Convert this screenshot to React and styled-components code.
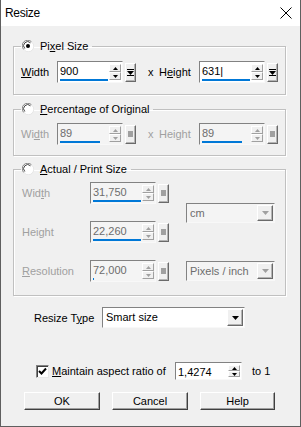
import React from 'react'
import styled, { createGlobalStyle } from 'styled-components'

const Global = createGlobalStyle`
  html, body { margin: 0; padding: 0; background: #f0f0f0; }
  body { font-family: "Liberation Sans", Arial, sans-serif; font-size: 11px; color: #000; }
  * { box-sizing: border-box; }
`

const Window = styled.div`
  width: 301px;
  height: 427px;
  display: flex;
  flex-direction: column;
  background: #f0f0f0;
  border: 1px solid #5f5f5f;
  border-top: none;
  overflow: hidden;
`

const TitleBar = styled.div`
  height: 26px;
  flex: none;
  background: #fff;
  display: flex;
  align-items: center;
  justify-content: space-between;
  padding: 0 8px 0 4px;
  font-size: 12px;
  letter-spacing: -0.3px;
`

const Body = styled.div`
  flex: 1;
  display: flex;
  flex-direction: column;
  padding: 13px 14px 0 12px;
`

// etched group box, legend sits on the top line
const Group = styled.fieldset`
  margin: ${p => p.$mt}px 0 0;
  padding: ${p => p.$pt}px 0 ${p => p.$pb}px ${p => p.$pl}px;
  border: 1px solid #c0c0c0;
  box-shadow: inset 1px 1px 0 #fff, 1px 1px 0 #fff;
  min-width: 0;
`

const Legend = styled.legend`
  height: 14px;
  padding: 0 4px 0 1px;
  margin-left: ${p => p.$ml || 0}px;
  display: flex;
  align-items: center;
  gap: 6px;
  line-height: 14px;
`

const Key = styled.span`
  text-decoration: underline;
  text-underline-offset: 1px;
`

const Row = styled.div`
  display: flex;
  align-items: center;
  height: 22px;
`

const Label = styled.span`
  flex: none;
  width: ${p => p.$w}px;
  margin-left: ${p => p.$ml || 0}px;
  color: ${p => (p.$off ? '#a0a0a0' : '#000')};
  white-space: nowrap;
`

const Field = styled.div`
  flex: none;
  display: flex;
  width: ${p => p.$w}px;
  height: ${p => p.$h || 22}px;
  border: 1px solid;
  border-color: #828282 #f8f8f8 #f8f8f8 #828282;
  background: ${p => (p.$off ? '#f4f4f4' : '#fff')};
  padding: 1px;
`

const TextArea = styled.div`
  flex: 1;
  display: flex;
  flex-direction: column;
  justify-content: space-between;
  padding-left: 1px;
  line-height: 16px;
  color: ${p => (p.$off ? '#6d6d6d' : '#000')};
`

const Bar = styled.div`
  height: 2px;
  background: #0078d7;
`

const Spinner = styled.div`
  flex: none;
  width: 12px;
  display: flex;
  flex-direction: column;
  margin: 1px 0 1px 1px;
`

const SpinBtn = styled.div`
  flex: 1;
  display: flex;
  align-items: center;
  justify-content: center;
  background: #f0f0f0;
  border: 1px solid;
  border-color: #fff #a0a0a0 #a0a0a0 #fff;
`

const EndBtn = styled.div`
  flex: none;
  width: 11px;
  height: 19px;
  margin-left: 2px;
  display: flex;
  align-items: center;
  justify-content: center;
  background: #f0f0f0;
  border: 1px solid;
  border-color: #fff #6a6a6a #6a6a6a #fff;
  box-shadow: inset -1px -1px 0 #b4b4b4;
`

const Grid = styled.div`
  display: grid;
  grid-template-columns: 68px 96px 89px;
  grid-template-rows: 22px 22px 22px;
  row-gap: 17px;
  align-items: center;
`

const Select = styled.div`
  display: flex;
  width: ${p => p.$w}px;
  height: ${p => p.$h || 20}px;
  margin-left: ${p => p.$ml || 0}px;
  border: 1px solid;
  border-color: #828282 #f8f8f8 #f8f8f8 #828282;
  background: ${p => (p.$off ? '#f4f4f4' : '#fff')};
  padding: 1px;
  grid-column: 3;
  grid-row: ${p => p.$row || 'auto'};
  align-self: ${p => p.$align || 'center'};
`

const SelText = styled.div`
  flex: 1;
  padding-left: 2px;
  line-height: 16px;
  font-size: 11px;
  white-space: nowrap;
  color: ${p => (p.$off ? '#6d6d6d' : '#000')};
`

const SelBtn = styled.div`
  flex: none;
  width: 16px;
  display: flex;
  align-items: center;
  justify-content: center;
  background: #f0f0f0;
  border: 1px solid;
  border-color: #fff #6a6a6a #6a6a6a #fff;
  box-shadow: inset -1px -1px 0 #b4b4b4;
`

const TypeRow = styled.div`
  display: flex;
  align-items: center;
  margin: 11px 0 0 21px;
`

const AspectRow = styled.div`
  display: flex;
  align-items: center;
  margin: 34px 0 0 23px;
`

const Check = styled.div`
  flex: none;
  width: 13px;
  height: 13px;
  margin-right: 3px;
  display: flex;
  align-items: center;
  justify-content: center;
  background: #fff;
  border: 1px solid;
  border-color: #828282 #e8e8e8 #e8e8e8 #828282;
  box-shadow: inset 1px 1px 0 #404040;
`

const Footer = styled.div`
  display: flex;
  gap: 12px;
  margin: 12px 0 0 11px;
`

const Button = styled.div`
  width: ${p => p.$w || 76}px;
  height: 18px;
  display: flex;
  align-items: center;
  justify-content: center;
  background: #f0f0f0;
  border: 1px solid;
  border-color: #fff #404040 #404040 #fff;
  box-shadow: inset -1px -1px 0 #a0a0a0;
  font-size: 11px;
`

const Radio = ({ on }) => (
  <svg width="12" height="12" viewBox="0 0 12 12">
    <circle cx="6" cy="6" r="5.5" fill="#fff" />
    <path d="M1.8 9.5 A5 5 0 0 1 9.5 1.8" fill="none" stroke="#808080" strokeWidth="1" />
    <path d="M2.8 8.5 A3.7 3.7 0 0 1 8.5 2.8" fill="none" stroke="#404040" strokeWidth="1" />
    <path d="M10.2 2.5 A5 5 0 0 1 2.5 10.2" fill="none" stroke="#e6e6e6" strokeWidth="1" />
    {on && <circle cx="6" cy="6" r="2" fill="#000" />}
  </svg>
)

const Tri = ({ up, off, w = 5 }) => (
  <svg width={w} height={Math.ceil(w / 2)} viewBox={`0 0 ${w} ${Math.ceil(w / 2)}`}>
    <path
      d={up ? `M0 ${Math.ceil(w / 2)} L${w / 2} 0 L${w} ${Math.ceil(w / 2)}Z` : `M0 0 L${w / 2} ${Math.ceil(w / 2)} L${w} 0Z`}
      fill={off ? '#a0a0a0' : '#000'}
    />
  </svg>
)

const EndGlyph = ({ off }) =>
  off ? (
    <svg width="5" height="6" viewBox="0 0 5 6"><rect width="5" height="6" fill="#a0a0a0" /></svg>
  ) : (
    <svg width="7" height="7" viewBox="0 0 7 7">
      <rect x="0" y="0" width="7" height="1" fill="#000" />
      <path d="M0 2 L7 2 L3.5 6Z" fill="#000" />
      <rect x="0" y="6" width="7" height="1" fill="#000" />
    </svg>
  )

const SpinField = ({ value, fill = 100, off, w = 66, h, end = true }) => (
  <>
    <Field $w={w} $h={h} $off={off}>
      <TextArea $off={off}>
        <span>{value}</span>
        {fill > 0 && <Bar style={{ width: `${fill}%` }} />}
      </TextArea>
      <Spinner>
        <SpinBtn><Tri up off={off} /></SpinBtn>
        <SpinBtn><Tri off={off} /></SpinBtn>
      </Spinner>
    </Field>
    {end && (
      <EndBtn>
        <EndGlyph off={off} />
      </EndBtn>
    )}
  </>
)

const CloseIcon = () => (
  <svg width="12" height="12" viewBox="0 0 12 12">
    <path d="M0.5 0.5 L11.5 11.5 M11.5 0.5 L0.5 11.5" stroke="#000" strokeWidth="1" />
  </svg>
)

const App = () => (
  <>
    <Global />
    <Window>
      <TitleBar>
        <span>Resize</span>
        <CloseIcon />
      </TitleBar>
      <Body>
        <Group $mt={0} $pt={8} $pb={11} $pl={7}>
          <Legend>
            <Radio on />
            <span>Pi<Key>x</Key>el Size</span>
          </Legend>
          <Row>
            <Label $w={36}><Key>W</Key>idth</Label>
            <SpinField value="900" />
            <Label $w={11} $ml={12}>x</Label>
            <Label $w={40}>H<Key>e</Key>ight</Label>
            <SpinField value="631|" />
          </Row>
        </Group>

        <Group $mt={7} $pt={7} $pb={10} $pl={7}>
          <Legend>
            <Radio />
            <span><Key>P</Key>ercentage of Original</span>
          </Legend>
          <Row>
            <Label $w={36} $off>Wi<Key>d</Key>th</Label>
            <SpinField value="89" fill={84} off />
            <Label $w={11} $ml={12} $off>x</Label>
            <Label $w={40} $off>Height</Label>
            <SpinField value="89" fill={84} off />
          </Row>
        </Group>

        <Group $mt={6} $pt={6} $pb={13} $pl={8}>
          <Legend $ml={-1}>
            <Radio />
            <span><Key>A</Key>ctual / Print Size</span>
          </Legend>
          <Grid>
            <Label $off style={{ gridRow: 1 }}>Wid<Key>t</Key>h</Label>
            <Row style={{ gridRow: 1 }}><SpinField value="31,750" off /></Row>
            <Select $w={89} $off $row="1 / span 2">
              <SelText $off>cm</SelText>
              <SelBtn><Tri off w={7} /></SelBtn>
            </Select>
            <Label $off style={{ gridRow: 2 }}>Height</Label>
            <Row style={{ gridRow: 2 }}><SpinField value="22,260" off /></Row>
            <Label $off style={{ gridRow: 3 }}><Key>R</Key>esolution</Label>
            <Row style={{ gridRow: 3 }}><SpinField value="72,000" fill={3} off /></Row>
            <Select $w={89} $off $row={3}>
              <SelText $off>Pixels / inch</SelText>
              <SelBtn><Tri off w={7} /></SelBtn>
            </Select>
          </Grid>
        </Group>

        <TypeRow>
          <Label $w={68}>Resize T<Key>y</Key>pe</Label>
          <Select $w={143} $h={21}>
            <SelText>Smart size</SelText>
            <SelBtn><Tri w={7} /></SelBtn>
          </Select>
        </TypeRow>

        <AspectRow>
          <Check>
            <svg width="9" height="9" viewBox="0 0 9 9">
              <path d="M1 4 L3.5 6.5 L8 1.5" fill="none" stroke="#000" strokeWidth="2" />
            </svg>
          </Check>
          <Label $w={123}><Key>M</Key>aintain aspect ratio of</Label>
          <SpinField value="1,4274" w={67} h={18} fill={0} end={false} />
          <Label $w={30} $ml={10}>to 1</Label>
        </AspectRow>

        <Footer>
          <Button>OK</Button>
          <Button>Cancel</Button>
          <Button $w={75}>Help</Button>
        </Footer>
      </Body>
    </Window>
  </>
)

export default App
